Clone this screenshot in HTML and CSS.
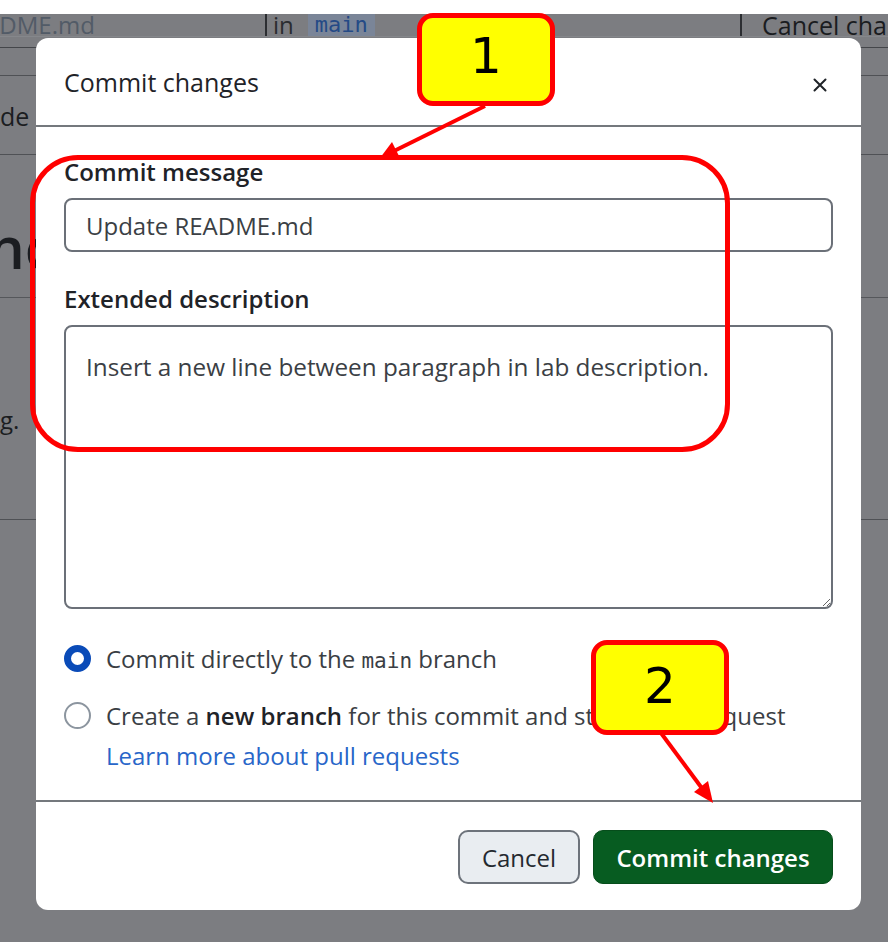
FILE: index.html
```html
<!DOCTYPE html>
<html lang="en">
<head>
<meta charset="utf-8">
<title>Commit changes</title>
<link rel="stylesheet" href="styles.css">
</head>
<body>
  <div class="topstrip"></div>
  <div class="backdrop">
    <div class="filebar">
      <span class="fname">README.md</span>
      <span class="vsep"></span>
      <span class="in-word">in</span>
      <code class="branch">main</code>
      <span class="fill"></span>
      <span class="vsep"></span>
      <span class="cancel-top">Cancel changes</span>
    </div>
    <div class="bar-gap"></div>
    <div class="tabrow"></div>
    <div class="crumbrow"><span>de 5</span></div>
    <div class="headrow"><span>nc</span></div>
    <div class="textrow"><span>g.</span></div>
  </div>

  <div class="modal" role="dialog" aria-label="Commit changes">
    <div class="modal-header">
      <h2 class="modal-title">Commit changes</h2>
      <button class="close-btn" aria-label="Close">
        <svg width="16" height="16" viewBox="0 0 16 16"><path d="M2.5 2.5 L13.5 13.5 M13.5 2.5 L2.5 13.5" stroke="#1f2328" stroke-width="2" stroke-linecap="round" fill="none"/></svg>
      </button>
    </div>
    <div class="modal-body">
      <label class="field-label" for="msg">Commit message</label>
      <input class="text-input" id="msg" type="text" value="Update README.md">
      <label class="field-label second" for="desc">Extended description</label>
      <textarea class="text-area" id="desc">Insert a new line between paragraph in lab description.</textarea>
      <div class="radio-row first">
        <span class="radio checked"></span>
        <span class="radio-text">Commit directly to the <code class="mono">main</code> branch</span>
      </div>
      <div class="radio-row">
        <span class="radio"></span>
        <span class="radio-text">Create a <strong>new branch</strong> for this commit and start a pull request<br><a class="link" href="#">Learn more about pull requests</a></span>
      </div>
    </div>
    <div class="modal-footer">
      <button class="btn btn-cancel">Cancel</button>
      <button class="btn btn-commit">Commit changes</button>
    </div>
  </div>

  <div class="ring"></div>
  <svg class="arrows" width="888" height="942" viewBox="0 0 888 942">
    <line x1="485" y1="106" x2="392" y2="152" stroke="#ff0000" stroke-width="4"/>
    <polygon points="380,158 400,158 392,142" fill="#ff0000"/>
    <line x1="661" y1="733" x2="704" y2="791" stroke="#ff0000" stroke-width="4"/>
    <polygon points="713,803 694,792 708,781" fill="#ff0000"/>
  </svg>
  <div class="callout c1">1</div>
  <div class="callout c2">2</div>
</body>
</html>
```

FILE: styles.css
```css
* { box-sizing: border-box; }
html, body { margin: 0; padding: 0; }
body {
  width: 888px;
  height: 942px;
  overflow: hidden;
  position: relative;
  background: #7c7d81;
  font-family: "Open Sans", "Noto Sans", sans-serif;
}

/* ---------- dimmed page behind the dialog ---------- */
.topstrip { height: 14px; background: #ffffff; }
.backdrop { background: #7c7d81; color: #1b1d21; }
.filebar {
  height: 23px;
  display: flex;
  align-items: stretch;
  font-size: 24px;
  line-height: 22px;
  border-bottom: 1px solid #85878b;
  white-space: nowrap;
  overflow: hidden;
}
.fname { flex: 0 0 309px; margin-left: -44px; color: #525b67; overflow: hidden; }
.vsep { flex: 0 0 2px; background: #2c2e32; }
.in-word { padding-left: 6px; color: #2a2c30; }
.branch {
  margin-left: 14px;
  padding: 0 7px;
  background: #7a8598;
  color: #244a86;
  font-family: "DejaVu Sans Mono", monospace;
  font-size: 22px;
}
.fill { flex: 1; }
.cancel-top {
  flex: 0 0 146px;
  padding-left: 20px;
  font-weight: 500;
  font-size: 25px;
  color: #1a1c20;
  overflow: hidden;
}
.bar-gap { height: 11px; border-bottom: 1px solid #44464a; }
.tabrow { height: 28px; border-bottom: 1px solid #4f5155; }
.crumbrow {
  height: 79px;
  display: flex;
  align-items: center;
  padding-top: 2px;
  font-size: 25px;
  border-bottom: 1px solid #4f5155;
}
.headrow {
  height: 143px;
  display: flex;
  align-items: center;
  padding-top: 40px;
  font-size: 58px;
  font-weight: 600;
  border-bottom: 1px solid #55575b;
}
.headrow span { margin-left: -12px; }
.textrow {
  height: 222px;
  display: flex;
  align-items: center;
  padding-top: 22px;
  font-size: 24px;
  border-bottom: 1px solid #4f5155;
}

/* ---------- dialog ---------- */
.modal {
  position: absolute;
  left: 36px;
  top: 38px;
  width: 825px;
  height: 872px;
  background: #ffffff;
  border-radius: 12px;
  display: flex;
  flex-direction: column;
  color: #1f2328;
}
.modal-header {
  height: 89px;
  flex: 0 0 89px;
  display: flex;
  align-items: center;
  justify-content: space-between;
  padding: 0 33px 0 28px;
  border-bottom: 2px solid #74787d;
}
.modal-title { margin: 0; font-size: 25px; font-weight: 400; color: #1f2328; }
.close-btn {
  border: 0;
  background: transparent;
  padding: 0;
  width: 16px;
  height: 16px;
  display: flex;
  margin-top: 6px;
}
.modal-body {
  flex: 1;
  display: flex;
  flex-direction: column;
  padding: 30px 28px 0;
}
.field-label {
  font-size: 24px;
  line-height: 30px;
  font-weight: 600;
  color: #1f2328;
  margin-bottom: 11px;
}
.field-label.second { margin-top: 32px; }
.text-input, .text-area {
  width: 100%;
  border: 2px solid #6b7078;
  border-radius: 8px;
  font-family: "Open Sans", "Noto Sans", sans-serif;
  font-size: 24px;
  color: #3b3f45;
  background: #ffffff;
  outline: none;
}
.text-input { height: 54px; padding: 0 20px; }
.text-area {
  height: 284px;
  padding: 25px 20px;
  line-height: 30px;
  font-size: 24.3px;
  resize: vertical;
}
.radio-row {
  display: flex;
  align-items: flex-start;
  gap: 15px;
  font-size: 24px;
  line-height: 40px;
  color: #3a3e44;
  margin-top: 15px;
}
.radio-row.first { margin-top: 30px; }
.radio {
  flex: 0 0 27px;
  width: 27px;
  height: 27px;
  margin-top: 6px;
  border-radius: 50%;
  border: 2px solid #8c959f;
  background: #fff;
}
.radio.checked { border: 7px solid #0a4bb8; }
.mono { font-family: "DejaVu Sans Mono", monospace; font-size: 21px; }
.radio-text strong { font-weight: 600; color: #1f2328; }
.link { color: #2866c9; text-decoration: none; }

.modal-footer {
  flex: 0 0 110px;
  border-top: 2px solid #74787d;
  display: flex;
  justify-content: flex-end;
  align-items: flex-start;
  gap: 13px;
  padding: 28px 28px 0;
}
.btn {
  height: 54px;
  border-radius: 10px;
  font-family: "Open Sans", "Noto Sans", sans-serif;
  font-size: 24px;
  padding: 0;
}
.btn-cancel {
  width: 122px;
  background: #e9edf1;
  border: 2px solid #6d737b;
  color: #24292f;
  font-weight: 500;
}
.btn-commit {
  width: 240px;
  background: #075c21;
  border: 1px solid #064d1b;
  color: #ffffff;
  font-weight: 600;
}

/* ---------- annotations ---------- */
.ring {
  position: absolute;
  left: 30px;
  top: 155px;
  width: 700px;
  height: 297px;
  border: 5px solid #ff0000;
  border-radius: 48px;
}
.arrows { position: absolute; left: 0; top: 0; }
.callout {
  position: absolute;
  width: 138px;
  border: 5px solid #ff0000;
  border-radius: 16px;
  background: #ffff00;
  color: #000;
  font-family: "DejaVu Sans", sans-serif;
  font-size: 50px;
  display: flex;
  align-items: center;
  justify-content: center;
}
.c1 { left: 417px; top: 13px; height: 93px; padding-bottom: 8px; }
.c2 { left: 591px; top: 640px; height: 95px; padding-bottom: 4px; }
```
